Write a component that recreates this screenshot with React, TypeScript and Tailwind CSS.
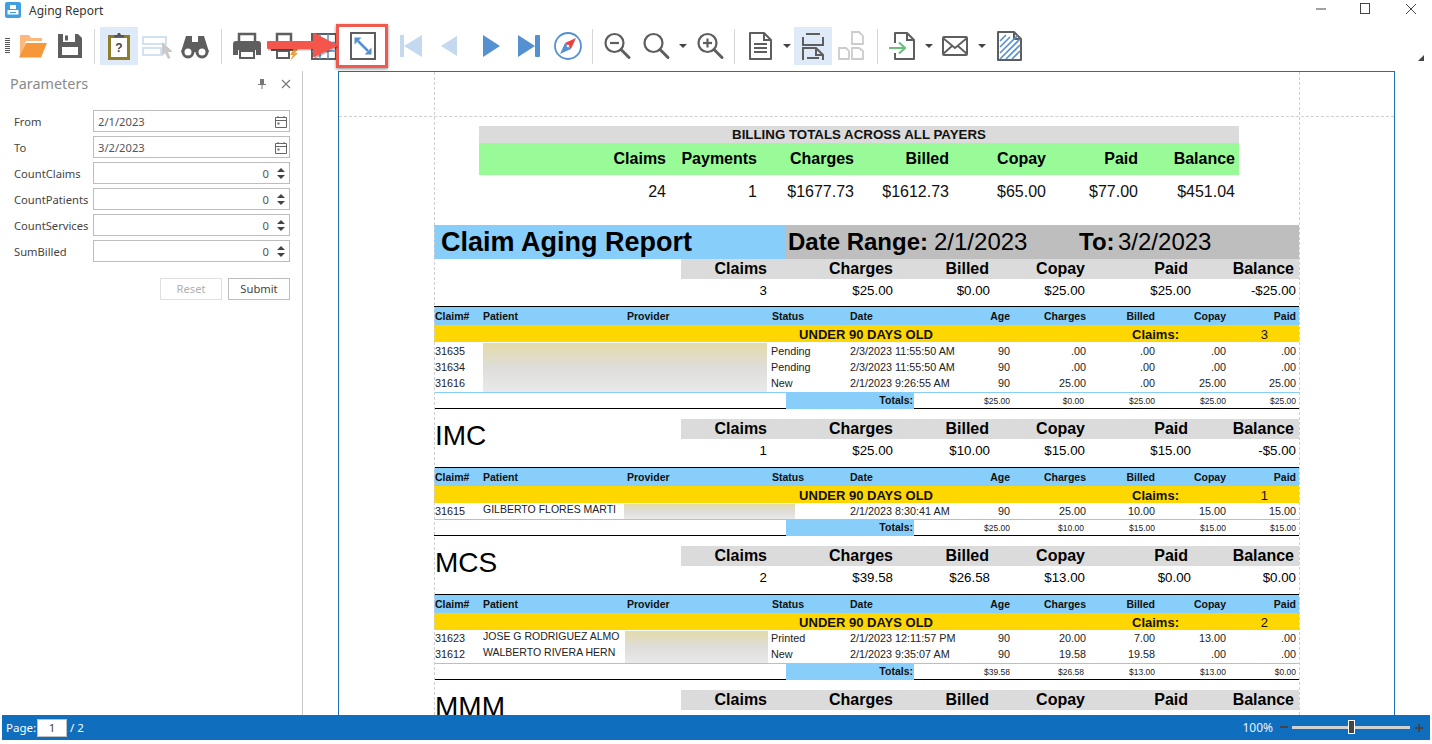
import React from 'react';

const GRAY = '#5e5e5e';
const BLUE = '#5590d0';
const PALE = '#c4d9ef';

const Ico: React.FC<{ children: React.ReactNode }> = ({ children }) => (
  <svg width="30" height="30" viewBox="0 0 30 30" fill="none">{children}</svg>
);

const Slot: React.FC<{ w: string; active?: boolean; children?: React.ReactNode }> = ({ w, active, children }) => (
  <div className={`${w} h-[38px] shrink-0 flex items-center justify-center ${active ? 'bg-[#deeaf8]' : ''}`}>{children}</div>
);

const Sep: React.FC<{ w: string }> = ({ w }) => (
  <div className={`${w} h-[35px] shrink-0 flex justify-center`}>
    <div className="w-px h-full bg-[#d6d6d6]" />
  </div>
);

const Caret: React.FC<{ w: string }> = ({ w }) => (
  <div className={`${w} h-[38px] shrink-0 flex items-center justify-center`}>
    <div className="w-0 h-0 border-x-[4px] border-x-transparent border-t-[4px] border-t-[#444444]" />
  </div>
);

const Magnifier: React.FC<{ sign?: 'minus' | 'plus' }> = ({ sign }) => (
  <Ico>
    <circle cx="12.5" cy="12" r="9" stroke={GRAY} strokeWidth="2.2" />
    <path d="M19 18.5l8 8" stroke={GRAY} strokeWidth="3" strokeLinecap="round" />
    {sign && <path d="M8 12h9" stroke={GRAY} strokeWidth="2.2" />}
    {sign === 'plus' && <path d="M12.5 7.5v9" stroke={GRAY} strokeWidth="2.2" />}
  </Ico>
);

const Toolbar = () => (
  <div className="relative h-[47px] flex items-center pb-[3px]">
    <div className="w-[13px] h-[38px] shrink-0 flex items-center pl-[5px]">
      <div className="w-[5px] h-[16px] bg-[repeating-linear-gradient(to_bottom,#555555_0,#555555_1px,#ffffff_1px,#ffffff_2px)]" />
    </div>
    <Slot w="w-[38px]">
      <Ico>
        <path d="M3 26V4h9l2 3h11v3H9L4 26z" fill="#fdb87b" />
        <path d="M9 12h21l-6 14.500H2z" fill="#f6983a" />
      </Ico>
    </Slot>
    <Slot w="w-[38px]">
      <Ico>
        <path d="M3 3h20l4 4v20H3z" fill={GRAY} />
        <rect x="8" y="3" width="12" height="8" fill="#ffffff" />
        <rect x="10" y="4.500" width="3" height="5" fill={GRAY} />
        <rect x="7" y="16" width="16" height="8" fill="#ffffff" />
      </Ico>
    </Slot>
    <Sep w="w-[11px]" />
    <Slot w="w-[38px]" active>
      <Ico>
        <rect x="5.500" y="5.500" width="19" height="22" fill="#ffffff" stroke="#8e7e2c" strokeWidth="3" />
        <path d="M10 6V4h3l1-2h2l1 2h3v2.500H10z" fill="#555555" />
        <text x="15" y="21" textAnchor="middle" fontSize="12" fontWeight="700" fontFamily="Liberation Sans" fill="#444444">?</text>
      </Ico>
    </Slot>
    <Slot w="w-[38px]">
      <Ico>
        <rect x="1" y="6" width="23" height="7" stroke={PALE} strokeWidth="1.500" />
        <rect x="1" y="17" width="18" height="7" stroke={PALE} strokeWidth="1.500" />
        <path d="M20 11l11 10h-5l2.500 6-2.500 1-3-6-3 3z" fill="#c9c9c9" />
      </Ico>
    </Slot>
    <Slot w="w-[38px]">
      <Ico>
        <path d="M6 5h6v6h6V5h6l5 16H1z" fill={GRAY} />
        <circle cx="8" cy="21" r="5" fill="#ffffff" stroke={GRAY} strokeWidth="3" />
        <circle cx="22" cy="21" r="5" fill="#ffffff" stroke={GRAY} strokeWidth="3" />
      </Ico>
    </Slot>
    <Sep w="w-[14px]" />
    <Slot w="w-[38px]">
      <Ico>
        <path d="M7 12V3h16v9" stroke={GRAY} strokeWidth="2.500" />
        <path d="M1 13a3 3 0 013-3h22a3 3 0 013 3v11h-5v-5H6v5H1z" fill={GRAY} />
        <rect x="8" y="20" width="14" height="7" stroke={GRAY} strokeWidth="2" />
      </Ico>
    </Slot>
    <Slot w="w-[38px]">
      <Ico>
        <path d="M7 12V3h14v9" stroke={GRAY} strokeWidth="2.500" />
        <path d="M1 12h26v8H1z" fill={GRAY} />
        <rect x="7" y="20" width="12" height="7" stroke={GRAY} strokeWidth="2" />
        <path d="M24 17h5l-4 5h3l-8 8 3-6h-3z" fill="#f0a03c" />
      </Ico>
    </Slot>
    <Slot w="w-[40px]">
      <Ico>
        <rect x="3" y="3" width="24" height="25" stroke={GRAY} strokeWidth="2" />
        <path d="M11 3v25M19 3v25M3 11.500h24M3 20h24" stroke={BLUE} strokeWidth="1.500" />
      </Ico>
    </Slot>
    <Slot w="w-[38px]">
      <Ico>
        <rect x="3" y="2" width="24" height="26" stroke={GRAY} strokeWidth="2" />
        <path d="M10 10l10 10" stroke={BLUE} strokeWidth="2.500" />
        <path d="M6.500 6.500h7l-7 7zM23.500 23.500h-7l7-7z" fill={BLUE} />
      </Ico>
    </Slot>
    <div className="w-[10px] shrink-0" />
    <Slot w="w-[38px]">
      <Ico>
        <rect x="4" y="4" width="4" height="22" fill={PALE} />
        <path d="M26 4v22L8 15z" fill={PALE} />
      </Ico>
    </Slot>
    <Slot w="w-[38px]">
      <Ico>
        <path d="M23 5v20L7 15z" fill={PALE} />
      </Ico>
    </Slot>
    <div className="w-[4px] shrink-0" />
    <Slot w="w-[38px]">
      <Ico>
        <path d="M7 4v22l17-11z" fill={BLUE} />
      </Ico>
    </Slot>
    <Slot w="w-[37px]">
      <Ico>
        <path d="M4 4v22l17-11z" fill={BLUE} />
        <rect x="21" y="4" width="5" height="22" rx="1" fill={BLUE} />
      </Ico>
    </Slot>
    <div className="w-[2px] shrink-0" />
    <Slot w="w-[38px]">
      <Ico>
        <circle cx="15" cy="15" r="13" stroke={BLUE} strokeWidth="1.800" />
        <path d="M23 7l-11 5 6 6z" fill="#ee3f3f" />
        <path d="M7 23l5-11 6 6z" fill={BLUE} />
        <circle cx="15" cy="15" r="1.300" fill="#ffffff" />
      </Ico>
    </Slot>
    <Sep w="w-[10px]" />
    <div className="w-px shrink-0" />
    <Slot w="w-[38px]"><Magnifier sign="minus" /></Slot>
    <div className="w-px shrink-0" />
    <Slot w="w-[38px]"><Magnifier /></Slot>
    <Caret w="w-[16px]" />
    <Slot w="w-[38px]"><Magnifier sign="plus" /></Slot>
    <Sep w="w-[10px]" />
    <div className="w-[2px] shrink-0" />
    <Slot w="w-[38px]">
      <Ico>
        <path d="M5 2h14l7 7v19H5z" stroke={GRAY} strokeWidth="2" strokeLinejoin="round" />
        <path d="M19 2v7h7" stroke={GRAY} strokeWidth="2" />
        <path d="M9 13h13M9 17h13M9 21h13" stroke={GRAY} strokeWidth="1.800" />
      </Ico>
    </Slot>
    <Caret w="w-[15px]" />
    <Slot w="w-[38px]" active>
      <Ico>
        <path d="M8 3h14M5 6v8h20V6" stroke={GRAY} strokeWidth="2" />
        <path d="M5 29V17h13l7 7v5" stroke={GRAY} strokeWidth="2" />
        <path d="M18 17v7h7" stroke={GRAY} strokeWidth="2" />
        <path d="M9 27h12" stroke={GRAY} strokeWidth="2" />
      </Ico>
    </Slot>
    <Slot w="w-[38px]">
      <Ico>
        <path d="M16 1h7l4 4v8H16zM3 17h7l3 3v8H3zM16 17h7l4 3v8H16z" stroke="#cccccc" strokeWidth="1.800" />
      </Ico>
    </Slot>
    <Sep w="w-[14px]" />
    <Slot w="w-[37px]">
      <Ico>
        <path d="M7 12V2h12l7 7v19H7v-6" stroke={GRAY} strokeWidth="2" strokeLinejoin="round" />
        <path d="M19 2v7h7" stroke={GRAY} strokeWidth="2" />
        <path d="M1 17h15M11 11.500l6 5.500-6 5.500" stroke="#6cc07e" strokeWidth="2.200" />
      </Ico>
    </Slot>
    <Caret w="w-[15px]" />
    <Slot w="w-[38px]">
      <Ico>
        <rect x="3" y="6" width="24" height="18" rx="1" stroke={GRAY} strokeWidth="2" />
        <path d="M3 7l12 10L27 7M3 23l9-8M27 23l-9-8" stroke={GRAY} strokeWidth="1.800" />
      </Ico>
    </Slot>
    <Caret w="w-[16px]" />
    <Slot w="w-[38px]">
      <Ico>
        <path d="M4 1h16l7 7v21H4z" stroke={GRAY} strokeWidth="2" strokeLinejoin="round" />
        <path d="M20 1v7h7" stroke={GRAY} strokeWidth="2" />
        <path d="M6 10l6-6M6 16l10-10M6 22l18-18M6 28l20-20M12 28l14-14M18 28l8-8" stroke={BLUE} strokeWidth="1.600" />
      </Ico>
    </Slot>
    <div className="ml-auto mr-[8px] mt-[24px] w-0 h-0 border-l-[6px] border-l-transparent border-b-[6px] border-b-[#444444]" />

    {/* red callout drawn over the toolbar */}
    <div className="absolute left-[336px] top-[0px] w-[52px] h-[44px] border-[3px] border-[#f0594e] shadow-[0_1px_3px_rgba(0,0,0,0.45)]" />
    <svg className="absolute left-[265px] top-[6px]" width="76" height="34" viewBox="0 0 76 34">
      <path d="M3 12h46V4l22 11.500L49 26v-8H3z" fill="#000000" opacity="0.25" stroke="#000000" strokeWidth="2" strokeLinejoin="round" transform="translate(1 1.500)" />
      <path d="M3 12h46V4l22 11.500L49 26v-8H3z" fill="#f4564c" stroke="#f4564c" strokeWidth="2" strokeLinejoin="round" />
    </svg>
  </div>
);

const Field: React.FC<{ label: string; value: string; date?: boolean }> = ({ label, value, date }) => (
  <div className="flex items-center h-[22px] mb-[4px]">
    <div className="w-[79px] shrink-0 pt-[2px] text-[11.2px] whitespace-nowrap text-[#444444]">{label}</div>
    <div className="w-[197px] h-full border border-[#bdbdbd] flex items-center px-[4px] pt-[1px] text-[11.2px] text-[#555555]">
      {date ? (
        <>
          <span className="flex-1 pt-[1px]">{value}</span>
          <svg width="12" height="13" viewBox="0 0 12 13" fill="none" className="-mr-[2px] -mt-[1px]">
            <path d="M.5 2.500h11v10H.5zM.5 5.500h11M3 1v2M9 1v2" stroke="#666666" />
            <rect x="2.500" y="7.500" width="2" height="2" fill="#666666" />
          </svg>
        </>
      ) : (
        <>
          <span className="flex-1 text-right pr-[8px] pt-[1px]">{value}</span>
          <div className="flex flex-col gap-[3px]">
            <div className="w-0 h-0 border-x-[4px] border-x-transparent border-b-[4px] border-b-[#444444]" />
            <div className="w-0 h-0 border-x-[4px] border-x-transparent border-t-[4px] border-t-[#444444]" />
          </div>
        </>
      )}
    </div>
  </div>
);

const Sidebar = () => (
  <div className="w-[303px] shrink-0 h-full border-r border-[#c8c8c8] pl-[14px]">
    <div className="flex items-center h-[25px] -ml-[4px] pr-[11px]">
      <span className="flex-1 text-[14.4px] text-[#8a8a8a]">Parameters</span>
      <svg width="8" height="10" viewBox="0 0 8 10" className="mr-[15px]">
        <path d="M2 0h4v5h2v1H4.500v4h-1V6H0V5h2z" fill="#777777" />
      </svg>
      <svg width="10" height="10" viewBox="0 0 10 10" fill="none">
        <path d="M1 1l8 8M9 1l-8 8" stroke="#777777" strokeWidth="1.100" />
      </svg>
    </div>
    <div className="mt-[14px]">
      <Field label="From" value="2/1/2023" date />
      <Field label="To" value="3/2/2023" date />
      <Field label="CountClaims" value="0" />
      <Field label="CountPatients" value="0" />
      <Field label="CountServices" value="0" />
      <Field label="SumBilled" value="0" />
    </div>
    <div className="flex justify-end gap-[6px] w-[276px] mt-[16px]">
      <div className="w-[62px] h-[22px] pt-[1px] border border-[#e0e0e0] flex items-center justify-center text-[11.2px] text-[#b0b0b0]">Reset</div>
      <div className="w-[62px] h-[22px] pt-[1px] border border-[#bdbdbd] flex items-center justify-center text-[11.2px] text-[#444444]">Submit</div>
    </div>
  </div>
);

const SUMMARY_HEAD = ['Claims', 'Charges', 'Billed', 'Copay', 'Paid', 'Balance'];

const Summary: React.FC<{ values: string[] }> = ({ values }) => (
  <div className="ml-[247px]">
    <div className="h-[20px] bg-[#dbdbdb] grid grid-cols-[86px_126px_96px_96px_103px_106px] items-center text-[16px] leading-[20px] font-bold text-black">
      {SUMMARY_HEAD.map((h) => (
        <div key={h} className="text-right">{h}</div>
      ))}
    </div>
    <div className="h-[20px] pt-[2px] grid grid-cols-[86px_126px_97px_95px_106px_105px] items-center text-[13.3px] text-black">
      {values.map((v, i) => (
        <div key={i} className="text-right">{v}</div>
      ))}
    </div>
  </div>
);

const TABLE_COLS = 'grid grid-cols-[49px_144px_145px_78px_90px_70px_76px_69px_71px_70px]';

type Row = { id: string; patient?: string; status: string; date: string; nums: string[] };

const ClaimTable: React.FC<{
  count: string;
  rows: Row[];
  totals: string[];
  redact: string;
  bodyPad: string;
}> = ({ count, rows, totals, redact, bodyPad }) => (
  <div>
    <div className="border-t border-black h-[19px] pt-[1px] bg-[#87cefa] bg-clip-padding">
      <div className={`${TABLE_COLS} h-full items-center text-[10.5px] font-bold text-[#111111]`}>
        <div className="pl-[1px]">Claim#</div>
        <div>Patient</div>
        <div>Provider</div>
        <div>Status</div>
        <div>Date</div>
        <div className="text-right">Age</div>
        <div className="text-right">Charges</div>
        <div className="text-right">Billed</div>
        <div className="text-right">Copay</div>
        <div className="text-right">Paid</div>
      </div>
    </div>
    <div className="h-[17px] pb-[2px] bg-[#ffd700] grid grid-cols-[499px_199px_136px] items-center text-[13px] font-bold text-[#111111]">
      <div className="text-right">UNDER 90 DAYS OLD</div>
      <div />
      <div className="flex justify-between">
        <span>Claims:</span>
        <span className="font-normal">{count}</span>
      </div>
    </div>
    <div className={`relative border-b border-[#87cefa] ${bodyPad}`}>
      {rows.map((r) => (
        <div key={r.id} className={`${TABLE_COLS} h-[16px] items-center text-[10.8px] text-[#222222]`}>
          <div className="pl-[1px]">{r.id}</div>
          <div className="col-span-2 -mt-[3px] whitespace-nowrap text-[10.5px]">{r.patient}</div>
          <div className="-ml-[1px]">{r.status}</div>
          <div className="whitespace-nowrap">{r.date}</div>
          {r.nums.map((n, i) => (
            <div key={i} className="text-right">{n}</div>
          ))}
        </div>
      ))}
      {/* blurred names sit over the rows */}
      <div className={`absolute top-[1px] bottom-0 bg-linear-to-b from-[#e4dba6] via-[#dedddb] to-[#e9e9e9] ${redact}`} />
    </div>
    <div className="h-[15px] grid grid-cols-[352px_128px_96px_74px_71px_71px_70px] items-center text-[8.5px] text-[#222222]">
      <div />
      <div className="bg-[#87cefa] h-full flex items-center justify-end pr-[1px] text-[10.5px] font-bold text-[#111111]">Totals:</div>
      {totals.map((t, i) => (
        <div key={i} className="text-right">{t}</div>
      ))}
    </div>
    <div className="border-t border-black" />
  </div>
);

const TOP_HEAD = ['Claims', 'Payments', 'Charges', 'Billed', 'Copay', 'Paid', 'Balance'];
const TOP_VALS = ['24', '1', '$1677.73', '$1612.73', '$65.00', '$77.00', '$451.04'];
const TOP_COLS = 'grid grid-cols-[187px_91px_97px_95px_97px_92px_97px]';

const Payer: React.FC<{ name: string; values: string[] }> = ({ name, values }) => (
  <div className="flex items-start h-[48px] mt-[10px]">
    <div className="w-0 text-[28px] leading-[33px] whitespace-nowrap text-black">
      <span className="ml-[1px]">{name}</span>
    </div>
    <div className="flex-1"><Summary values={values} /></div>
  </div>
);

const PageBody = () => (
  <div className="relative h-full overflow-hidden font-['Liberation_Sans',Arial,sans-serif]">
    <div className="h-[45px] border-b border-dashed border-[#cfcfcf]" />
    <div className="ml-[140px] w-[760px] mt-[9px]">
      <div className="h-[17px] bg-[#dbdbdb] text-center text-[13.3px] leading-[17px] font-bold text-[#111111]">BILLING TOTALS ACROSS ALL PAYERS</div>
      <div className={`h-[32px] bg-[#98fb98] ${TOP_COLS} items-center text-[16px] font-bold text-black`}>
        {TOP_HEAD.map((h) => (
          <div key={h} className="text-right">{h}</div>
        ))}
      </div>
      <div className={`h-[32px] pt-[1px] ${TOP_COLS} items-center text-[16px] text-[#111111]`}>
        {TOP_VALS.map((v) => (
          <div key={v} className="text-right">{v}</div>
        ))}
      </div>
    </div>

    <div className="ml-[95px] w-[865px] mt-[18px]">
      <div className="flex h-[34px]">
        <div className="w-[352px] bg-[#87cefa] pl-[7px] text-[27px] leading-[34px] font-bold text-black">Claim Aging Report</div>
        <div className="flex-1 bg-[#bebebe] flex items-center text-[24px] text-black pl-[2px]">
          <span className="w-[146px] font-bold whitespace-nowrap">Date Range:</span>
          <span className="w-[145px]">2/1/2023</span>
          <span className="w-[39px] font-bold">To:</span>
          <span>3/2/2023</span>
        </div>
      </div>
      <Summary values={['3', '$25.00', '$0.00', '$25.00', '$25.00', '-$25.00']} />
      <div className="h-[7px]" />
      <ClaimTable
        count="3"
        bodyPad="pt-[1px] pb-[1px]"
        redact="left-[49px] w-[284px]"
        rows={[
          { id: '31635', status: 'Pending', date: '2/3/2023 11:55:50 AM', nums: ['90', '.00', '.00', '.00', '.00'] },
          { id: '31634', status: 'Pending', date: '2/3/2023 11:55:50 AM', nums: ['90', '.00', '.00', '.00', '.00'] },
          { id: '31616', status: 'New', date: '2/1/2023 9:26:55 AM', nums: ['90', '25.00', '.00', '25.00', '25.00'] },
        ]}
        totals={['$25.00', '$0.00', '$25.00', '$25.00', '$25.00']}
      />

      <Payer name="IMC" values={['1', '$25.00', '$10.00', '$15.00', '$15.00', '-$5.00']} />
      <ClaimTable
        count="1"
        bodyPad=""
        redact="left-[190px] w-[171px]"
        rows={[
          { id: '31615', patient: 'GILBERTO FLORES MARTI', status: '', date: '2/1/2023 8:30:41 AM', nums: ['90', '25.00', '10.00', '15.00', '15.00'] },
        ]}
        totals={['$25.00', '$10.00', '$15.00', '$15.00', '$15.00']}
      />

      <Payer name="MCS" values={['2', '$39.58', '$26.58', '$13.00', '$0.00', '$0.00']} />
      <ClaimTable
        count="2"
        bodyPad="pb-[1px]"
        redact="left-[191px] w-[143px]"
        rows={[
          { id: '31623', patient: 'JOSE G RODRIGUEZ ALMO', status: 'Printed', date: '2/1/2023 12:11:57 PM', nums: ['90', '20.00', '7.00', '13.00', '.00'] },
          { id: '31612', patient: 'WALBERTO RIVERA HERN', status: 'New', date: '2/1/2023 9:35:07 AM', nums: ['90', '19.58', '19.58', '.00', '.00'] },
        ]}
        totals={['$39.58', '$26.58', '$13.00', '$13.00', '$0.00']}
      />

      <Payer name="MMM" values={['', '', '', '', '', '']} />
    </div>

    {/* margin guides of the printed page */}
    <div className="absolute left-[95px] top-0 bottom-0 border-l border-dashed border-[#cfcfcf]" />
    <div className="absolute left-[960px] top-0 bottom-0 border-l border-dashed border-[#cfcfcf]" />
  </div>
);

const StatusBar = () => (
  <div className="mx-[2px] h-[25px] bg-[#106ebe] flex items-center text-[11.5px] text-white pl-[4px]">
    <span>Page:</span>
    <div className="ml-[1px] w-[30px] h-[18px] bg-white border border-[#c0c0c0] text-center leading-[16px] text-[#444444]">1</div>
    <span className="ml-[3px]">/ 2</span>
    <span className="ml-auto text-[12px] text-[#e8f1fa]">100%</span>
    <svg width="8" height="3" viewBox="0 0 8 3" className="ml-[7px]"><rect width="8" height="2" fill="#444444" /></svg>
    <div className="relative w-[118px] h-[3px] bg-[#d0d0d0] ml-[4px]">
      <div className="absolute left-[56px] -top-[6px] w-[7px] h-[14px] bg-[#444444] border border-white" />
    </div>
    <svg width="8" height="8" viewBox="0 0 8 8" className="ml-[5px] mr-[7px]"><path d="M3 0h2v3h3v2H5v3H3V5H0V3h3z" fill="#444444" /></svg>
  </div>
);

export default function App() {
  return (
    <div className="w-[1432px] h-[744px] bg-white overflow-hidden font-['Noto_Sans',sans-serif]">
      <div className="h-[24px] flex items-center">
        <svg width="16" height="16" viewBox="0 0 16 16" className="ml-[5px] -mt-[4px]">
          <rect width="16" height="16" rx="2" fill="#3f9fe0" />
          <path d="M5 3h6v4H5zM2.500 8h11v4.500h-11z" fill="#ffffff" />
          <rect x="5" y="10" width="6" height="1" fill="#3f9fe0" />
        </svg>
        <span className="ml-[8px] text-[12px] text-[#333333] -mt-[3px]">Aging Report</span>
        <div className="ml-auto flex items-center -mt-[6px]">
          <svg width="44" height="12" viewBox="0 0 44 12"><path d="M0 6h10" stroke="#444444" /></svg>
          <svg width="45" height="12" viewBox="0 0 45 12" fill="none"><rect x=".5" y=".5" width="9" height="10" stroke="#444444" /></svg>
          <svg width="27" height="12" viewBox="0 0 27 12" fill="none"><path d="M1 1l10 10M11 1L1 11" stroke="#444444" /></svg>
        </div>
      </div>
      <Toolbar />
      <div className="h-[644px] flex">
        <Sidebar />
        <div className="flex-1 min-w-0 h-full pl-[35px]">
          <div className="w-[1057px] h-full border-x border-t border-[#1f6fb5]">
            <PageBody />
          </div>
        </div>
      </div>
      <StatusBar />
    </div>
  );
}
